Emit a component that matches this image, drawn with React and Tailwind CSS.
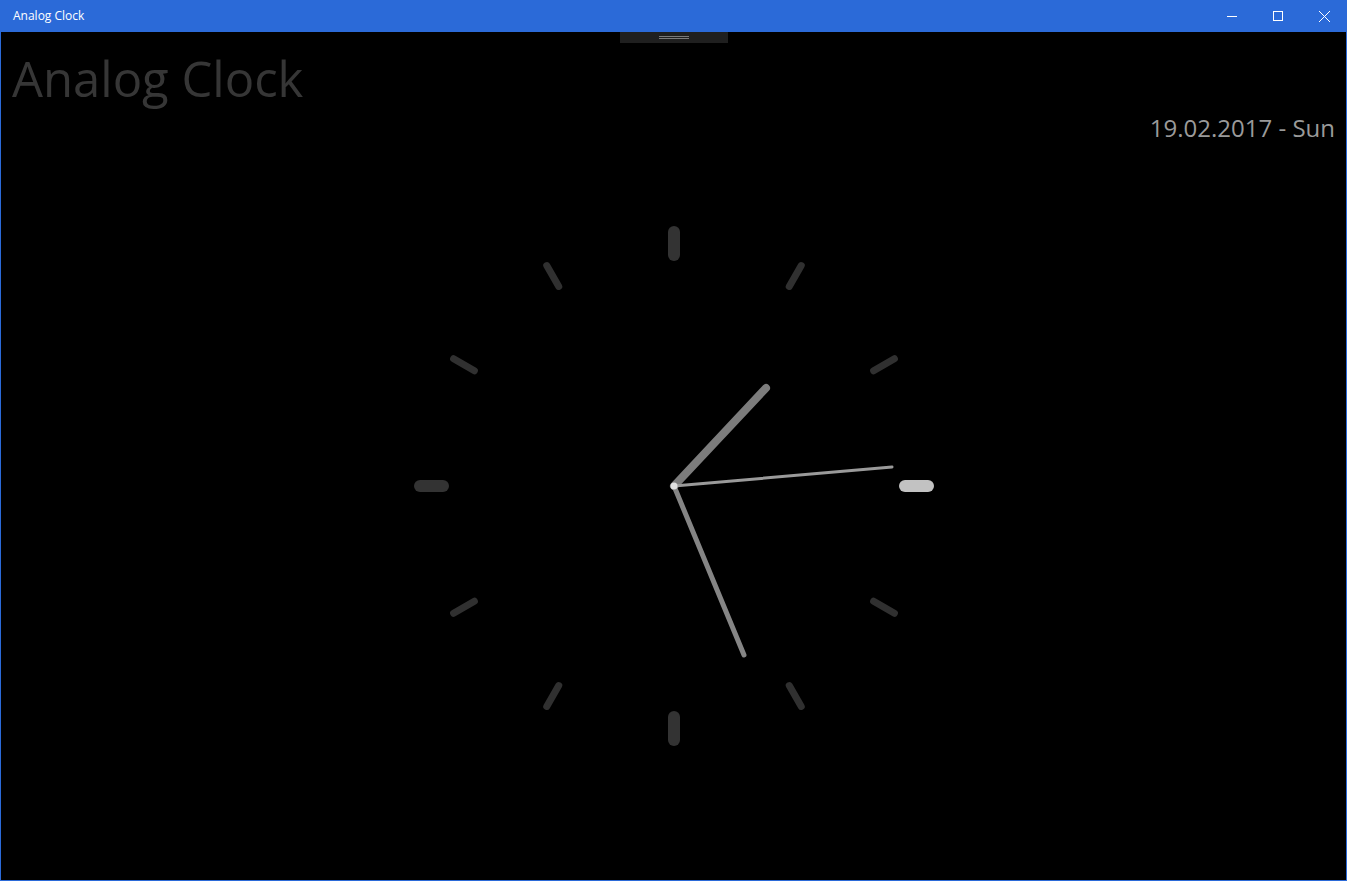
import React from "react";

const C = 280;

function polar(r, deg) {
  const a = (deg * Math.PI) / 180;
  return [C + r * Math.sin(a), C - r * Math.cos(a)];
}

function Clock() {
  const ticks = [];
  for (let i = 0; i < 12; i++) {
    const major = i % 3 === 0;
    const w = major ? 12 : 7;
    const r1 = (major ? 225 : 227) + w / 2;
    const r2 = (major ? 260 : 258) - w / 2;
    const [x1, y1] = polar(r1, i * 30);
    const [x2, y2] = polar(r2, i * 30);
    const color = i === 3 ? "#c2c2c2" : major ? "#333333" : "#303030";
    ticks.push(
      <line key={i} x1={x1} y1={y1} x2={x2} y2={y2} stroke={color} strokeWidth={w} strokeLinecap="round" />
    );
  }
  return (
    <svg width="560" height="560" viewBox="0 0 560 560" className="block mx-auto mt-[57px]">
      {ticks}
      <line x1={C} y1={C} x2={C + 92} y2={C - 98} stroke="#7c7c7c" strokeWidth="8" strokeLinecap="round" />
      <line x1={C} y1={C} x2={C + 70} y2={C + 169} stroke="#858585" strokeWidth="5" strokeLinecap="round" />
      <line x1={C} y1={C} x2={C + 218} y2={C - 19} stroke="#9a9a9a" strokeWidth="3" strokeLinecap="round" />
      <circle cx={C} cy={C} r="3.5" fill="#e0e0e0" />
    </svg>
  );
}

export default function App() {
  return (
    <div
      className="w-[1347px] h-[881px] bg-black flex flex-col border-x border-b border-[#2b6ad8] overflow-hidden"
      style={{ fontFamily: '"Open Sans", "Noto Sans", sans-serif' }}
    >
      <div className="h-8 shrink-0 bg-[#2b6ad8] flex items-center -mx-px">
        <div className="pl-[13px] text-[12px] text-white flex-1">Analog Clock</div>
        <div className="flex h-full">
          <div className="w-[46px] h-full flex items-center justify-center">
            <svg width="10" height="10" viewBox="0 0 10 10"><line x1="0" y1="5.5" x2="10" y2="5.5" stroke="white" strokeWidth="1" /></svg>
          </div>
          <div className="w-[46px] h-full flex items-center justify-center">
            <svg width="10" height="10" viewBox="0 0 10 10"><rect x="0.5" y="0.5" width="9" height="9" fill="none" stroke="white" strokeWidth="1" /></svg>
          </div>
          <div className="w-[46px] h-full flex items-center justify-center">
            <svg width="11" height="11" viewBox="0 0 11 11"><line x1="0" y1="0" x2="11" y2="11" stroke="white" strokeWidth="1" /><line x1="11" y1="0" x2="0" y2="11" stroke="white" strokeWidth="1" /></svg>
          </div>
        </div>
      </div>
      <div className="relative flex-1">
        <div className="absolute top-0 left-[619px] w-[108px] h-[11px] bg-[#1f1f1f] flex flex-col items-center justify-center gap-[1px]">
          <div className="w-[30px] h-px bg-[#7a7a7a]" />
          <div className="w-[30px] h-px bg-[#7a7a7a]" />
        </div>
        <div className="h-[80px] pl-[11px] pt-[16px] text-[49px] leading-[60px] text-[#363636]">Analog Clock</div>
        <div className="h-[37px] pr-[11px] text-right text-[24px] leading-[31px] text-[#9a9a9a]">19.02.2017 - Sun</div>
        <Clock />
      </div>
    </div>
  );
}
